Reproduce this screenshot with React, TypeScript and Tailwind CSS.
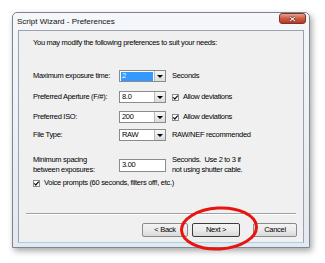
import { ReactNode } from "react";

function Combo(props: { value: string; selected?: boolean }) {
    return (
        <div className="flex h-[12px] w-[47px] border border-[#8b8b8b] bg-white">
            <div className="flex flex-1 items-center pl-[1px]">
                {props.selected ? (
                    <span className="flex h-[9px] w-[32px] items-center bg-[#3399ff] pl-[1px] text-white">{props.value}</span>
                ) : (
                    <span className="pl-[1px]">{props.value}</span>
                )}
            </div>
            <div className="flex w-[11px] items-center justify-center border-l border-[#b9b9b9] bg-gradient-to-b from-[#f6f6f6] to-[#dcdcdc]">
                <div className="h-0 w-0 border-x-[3px] border-t-[3px] border-x-transparent border-t-black" />
            </div>
        </div>
    );
}

function Check(props: { children: ReactNode }) {
    return (
        <div className="flex items-center gap-[4px]">
            <div className="relative h-[7px] w-[7px] border border-[#8a8a8a] bg-white">
                <svg viewBox="0 0 7 7" className="absolute -left-[1px] -top-[1px] h-[7px] w-[7px]">
                    <path d="M1.3 3.4 L2.8 5 L5.8 1.6" fill="none" stroke="#111" strokeWidth="1.2" />
                </svg>
            </div>
            <span>{props.children}</span>
        </div>
    );
}

function Row(props: { label: string; mt: string; children: ReactNode }) {
    return (
        <div className={"flex h-[12px] items-center " + props.mt}>
            <div className="w-[86px]">{props.label}</div>
            {props.children}
        </div>
    );
}

function Button(props: { label: string; w: string; focus?: boolean }) {
    return (
        <div
            className={
                "flex h-[14px] items-center justify-center rounded-[2px] border bg-gradient-to-b from-[#f3f3f3] via-[#ebebeb] to-[#d9d9d9] " +
                props.w +
                (props.focus ? " border-[#3c3c3c]" : " border-[#8a8a8a]")
            }
        >
            {props.label}
        </div>
    );
}

export default function App() {
    return (
        <div className="relative h-[263px] w-[325px] overflow-hidden bg-white pl-[12px] pt-[12px] font-['Liberation_Sans',Arial,sans-serif] text-[7.5px] leading-[10px] tracking-[-0.3px] text-black">
            <div className="flex h-[236px] w-[298px] flex-col rounded-t-[5px] border border-[#7e858c] bg-gradient-to-b from-[#f5f7fa] to-[#e4e9ef] shadow-[2px_3px_6px_rgba(0,0,0,0.35)]">
                <div className="flex h-[17px] items-center justify-between pl-[4px] pr-[3px]">
                    <span className="text-[8px] tracking-normal text-[#111]">Script Wizard - Preferences</span>
                    <div className="flex h-[11px] w-[27px] items-center justify-center self-start rounded-[3px] border border-[#7a3326] bg-gradient-to-b from-[#e3a08f] via-[#cf5a44] to-[#b8382a]">
                        <svg viewBox="0 0 8 7" className="h-[6px] w-[7px]">
                            <path d="M1 1 L7 6 M7 1 L1 6" stroke="#5a1a10" strokeWidth="2.4" />
                            <path d="M1 1 L7 6 M7 1 L1 6" stroke="#fff" strokeWidth="1.4" />
                        </svg>
                    </div>
                </div>
                <div className="mx-[5px] flex h-[213px] flex-col border border-[#99a3ad] bg-[#f0f0f0] border-b-[#9fd4ea]">
                    <div className="ml-[14px] mt-[7px]">You may modify the following preferences to suit your needs:</div>

                    <div className="ml-[14px] flex flex-col">
                        <Row label="Maximum exposure time:" mt="mt-[22px]">
                            <Combo value="2" selected />
                            <span className="ml-[6px]">Seconds</span>
                        </Row>
                        <Row label="Preferred Aperture (F/#):" mt="mt-[9px]">
                            <Combo value="8.0" />
                            <div className="ml-[6px]">
                                <Check>Allow deviations</Check>
                            </div>
                        </Row>
                        <Row label="Preferred ISO:" mt="mt-[8px]">
                            <Combo value="200" />
                            <div className="ml-[6px]">
                                <Check>Allow deviations</Check>
                            </div>
                        </Row>
                        <Row label="File Type:" mt="mt-[6px]">
                            <Combo value="RAW" />
                            <span className="ml-[6px]">RAW/NEF recommended</span>
                        </Row>

                        <div className="mt-[14px] flex h-[20px] items-center">
                            <div className="w-[86px]">
                                Minimum spacing
                                <br />
                                between exposures:
                            </div>
                            <div className="flex h-[13px] w-[47px] items-center border border-[#8b8b8b] bg-white pl-[2px]">3.00</div>
                            <div className="ml-[6px]">
                                Seconds.&nbsp; Use 2 to 3 if
                                <br />
                                not using shutter cable.
                            </div>
                        </div>

                        <div className="mt-[2px] flex h-[12px] items-center">
                            <Check>Voice prompts (60 seconds, filters off!, etc.)</Check>
                        </div>
                    </div>

                    <div className="mx-[7px] mt-[24px] h-[2px] border-t border-b border-t-[#a0a0a0] border-b-white" />

                    <div className="mr-[6px] mt-[8px] flex justify-end">
                        <Button label="< Back" w="w-[46px]" />
                        <div className="ml-[4px]">
                            <Button label="Next >" w="w-[48px]" focus />
                        </div>
                        <div className="ml-[13px]">
                            <Button label="Cancel" w="w-[44px]" />
                        </div>
                    </div>
                </div>
            </div>

            <svg className="absolute left-[179px] top-[206px] h-[45px] w-[80px]" viewBox="0 0 80 45">
                <ellipse cx="40" cy="22.5" rx="37.5" ry="20.5" fill="none" stroke="#e8140f" strokeWidth="3" transform="rotate(-3 40 22.5)" />
            </svg>
        </div>
    );
}
